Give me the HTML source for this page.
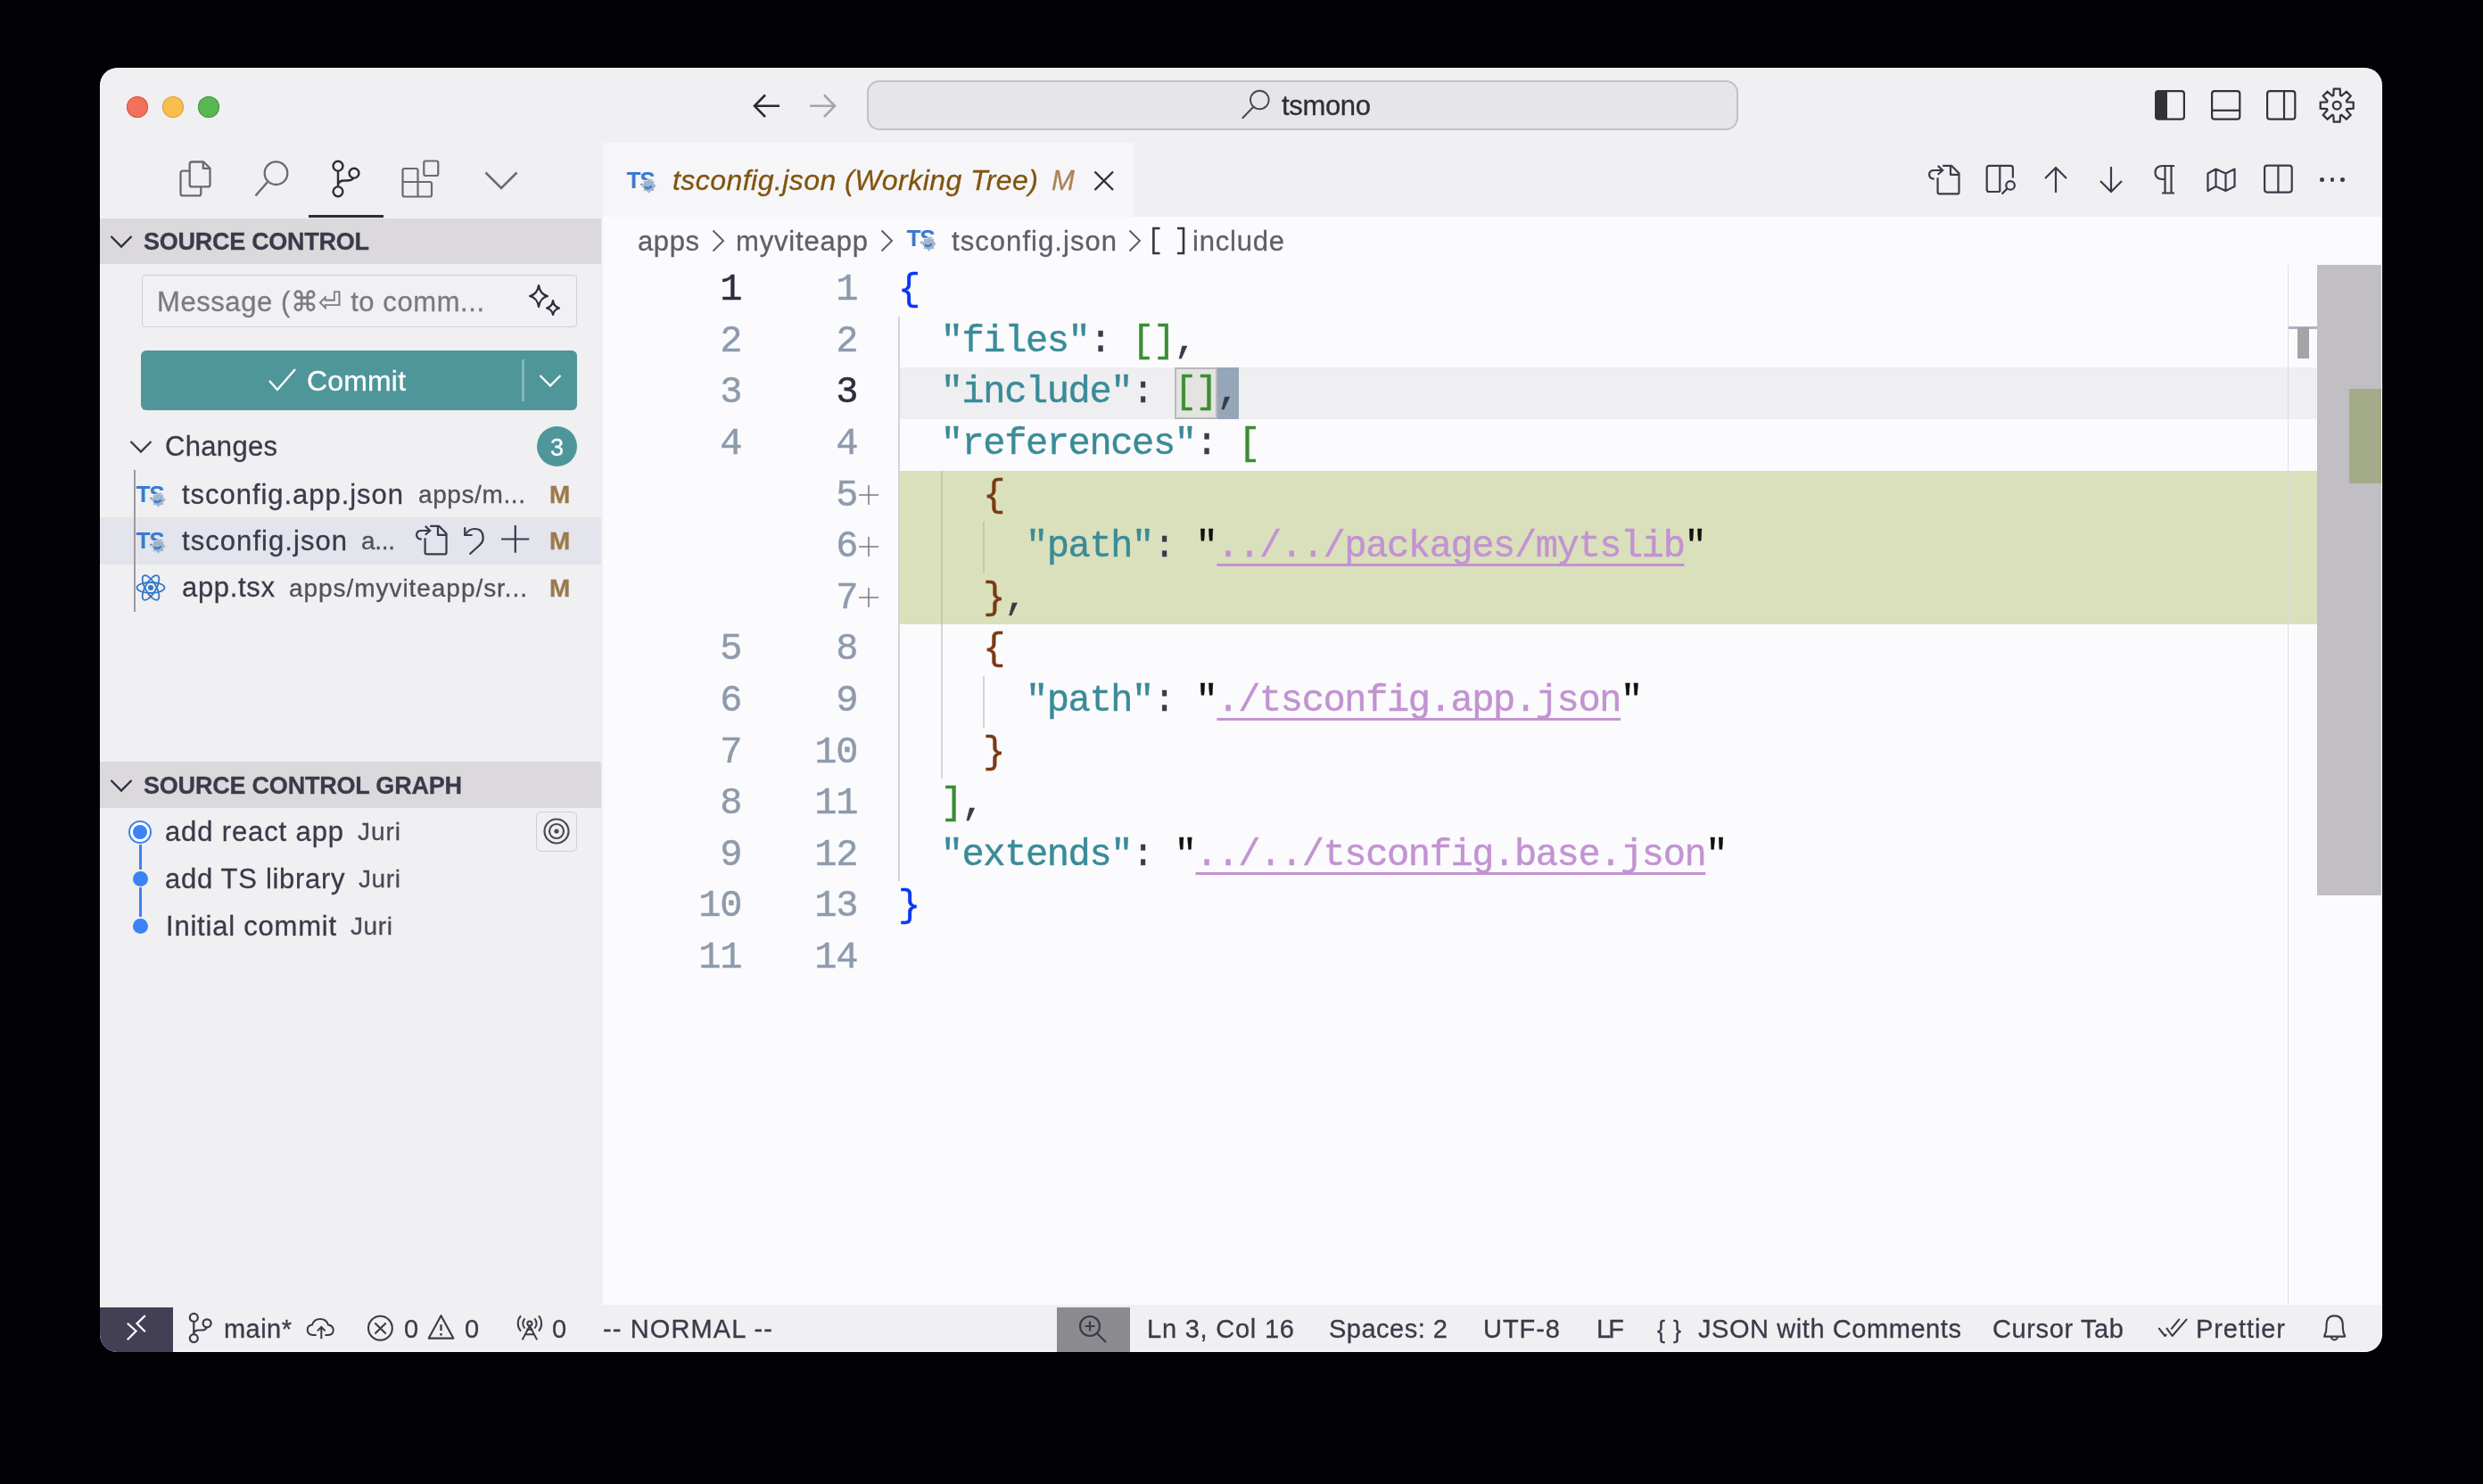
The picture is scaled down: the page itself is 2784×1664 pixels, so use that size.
<!DOCTYPE html>
<html><head><meta charset="utf-8">
<style>
*{box-sizing:border-box;margin:0;padding:0}
html,body{width:2784px;height:1664px;background:#020105;overflow:hidden;position:relative;font-family:"Liberation Sans",sans-serif;color:#3b3a4a}
.a{position:absolute}
.t{position:absolute;white-space:pre;line-height:1;will-change:transform;-webkit-text-stroke:0.3px currentColor}
svg{position:absolute;overflow:visible}
.cl{will-change:transform;-webkit-text-stroke:0.45px currentColor;position:absolute;left:1007px;height:57.6px;line-height:57.6px;font-family:"Liberation Mono",monospace;font-size:42px;letter-spacing:-1.38px;white-space:pre;color:#3b3a4a}
.ln{will-change:transform;-webkit-text-stroke:0.45px currentColor;position:absolute;height:57.6px;line-height:57.6px;font-family:"Liberation Mono",monospace;font-size:42px;letter-spacing:-1.38px;white-space:pre;color:#8d9bad;text-align:right}
.l1{left:630px;width:201px}
.l2{left:760px;width:201px}
.act{color:#2e2d3d}
.pl{position:absolute;left:958px;width:30px;height:57.6px;line-height:57.6px;font-family:"Liberation Sans",sans-serif;font-size:38px;color:#8a8a8a;text-align:center}
.k{color:#3a8b99}.p{color:#3b3a4a}.q{color:#111}.s{color:#c293d2;text-decoration:underline;text-decoration-thickness:2.5px;text-underline-offset:8px;text-decoration-skip-ink:none}
.b0{color:#0a36f5}.b1{color:#3a8e33}.b2{color:#7a3a15}
</style></head><body>
<div class="a" style="left:112.0px;top:76.0px;width:2559.0px;height:1440.0px;background:#f0eff1;border-radius:20px;box-shadow:inset 0 0 0 1px rgba(255,255,255,0.55);"></div>
<div class="a" style="left:142.0px;top:108.0px;width:24.0px;height:24.0px;background:#f2705d;border-radius:50%;box-shadow:inset 0 0 0 1px #d9553f;"></div>
<div class="a" style="left:182.0px;top:108.0px;width:24.0px;height:24.0px;background:#f8bd4c;border-radius:50%;box-shadow:inset 0 0 0 1px #dba236;"></div>
<div class="a" style="left:222.0px;top:108.0px;width:24.0px;height:24.0px;background:#5ab653;border-radius:50%;box-shadow:inset 0 0 0 1px #3e9a3a;"></div>
<div class="a" style="left:676.0px;top:243.0px;width:1995.0px;height:1220.0px;background:#fbfafc;"></div>
<div class="a" style="left:676.0px;top:160.0px;width:595.0px;height:83.0px;background:#f6f5f7;"></div>
<div class="a" style="left:112.0px;top:245.0px;width:562.0px;height:51.0px;background:#dbd9dc;"></div>
<div class="a" style="left:112.0px;top:854.0px;width:562.0px;height:52.0px;background:#dbd9dc;"></div>
<div class="a" style="left:112.0px;top:580.0px;width:562.0px;height:53.0px;background:#e3e4ec;"></div>
<div class="a" style="left:346.0px;top:241.0px;width:84.0px;height:3.0px;background:#2e2d3d;"></div>
<div class="a" style="left:112.0px;top:1466.0px;width:82.0px;height:50.0px;background:#433f55;border-bottom-left-radius:20px;"></div>
<div class="a" style="left:1185.0px;top:1466.0px;width:82.0px;height:50.0px;background:#8b8a8f;"></div>
<svg style="left:840.0px;top:100.0px;" width="40.0" height="40.0" viewBox="0 0 40 40"><path d="M34 18.8H6.5M18 6.5L6 18.8L18 31" fill="none" stroke="#2b2a30" stroke-width="2.6"/></svg>
<svg style="left:902.0px;top:100.0px;" width="40.0" height="40.0" viewBox="0 0 40 40"><path d="M6 18.8H33.5M22 6.5L34 18.8L22 31" fill="none" stroke="#a6a5a9" stroke-width="2.6"/></svg>
<div class="a" style="left:972.0px;top:90.0px;width:977.0px;height:56.0px;background:#e6e5e9;border:2.2px solid #c2c1c5;border-radius:14px;"></div>
<svg style="left:1390.0px;top:98.0px;" width="40.0" height="40.0" viewBox="0 0 40 40"><circle cx="22.3" cy="14" r="10.3" fill="none" stroke="#4a494f" stroke-width="1.9"/><path d="M15 22.3L2.8 34.8" stroke="#4a494f" stroke-width="2"/></svg>
<div class="t" style="left:1437.0px;top:103.4px;font-size:31.0px;color:#2f2e33;letter-spacing:-0.33px;">tsmono</div>
<svg style="left:2416.0px;top:101.0px;" width="34.0" height="34.0" viewBox="0 0 34 34"><rect x="1.1" y="1.1" width="31.8" height="31.6" rx="3" fill="none" stroke="#333238" stroke-width="2.2"/><path d="M1 4Q1 1 4 1H14V33H4Q1 33 1 30Z" fill="#333238"/></svg>
<svg style="left:2479.0px;top:101.0px;" width="34.0" height="34.0" viewBox="0 0 34 34"><rect x="1.1" y="1.1" width="31.2" height="31.6" rx="3" fill="none" stroke="#333238" stroke-width="2.2"/><path d="M1 22.8H33" stroke="#333238" stroke-width="2.2"/></svg>
<svg style="left:2541.0px;top:101.0px;" width="34.0" height="34.0" viewBox="0 0 34 34"><rect x="1.1" y="1.1" width="31.2" height="31.6" rx="3" fill="none" stroke="#333238" stroke-width="2.2"/><path d="M20 1V33" stroke="#333238" stroke-width="2.2"/></svg>
<svg style="left:2601.0px;top:98.5px;" width="38.4" height="38.4" viewBox="0 0 38.4 38.4"><polygon points="15.33,7.95 15.77,0.71 22.63,0.71 23.07,7.95 24.42,8.50 29.85,3.71 34.69,8.55 29.90,13.98 30.45,15.33 37.69,15.77 37.69,22.63 30.45,23.07 29.90,24.42 34.69,29.85 29.85,34.69 24.42,29.90 23.07,30.45 22.63,37.69 15.77,37.69 15.33,30.45 13.98,29.90 8.55,34.69 3.71,29.85 8.50,24.42 7.95,23.07 0.71,22.63 0.71,15.77 7.95,15.33 8.50,13.98 3.71,8.55 8.55,3.71 13.98,8.50" fill="none" stroke="#333238" stroke-width="2.2" stroke-linejoin="miter"/><circle cx="19.2" cy="19.2" r="4.4" fill="none" stroke="#333238" stroke-width="2.3"/></svg>
<svg style="left:200.0px;top:179.0px;" width="38.0" height="42.0" viewBox="0 0 38 42"><path d="M15.2 2.5H28.3L35.5 9.7V27.9Q35.5 30.4 33 30.4H15.2Q12.7 30.4 12.7 27.9V5Q12.7 2.5 15.2 2.5Z M27.8 2.5V9.9H35.5 M12.7 12.7H5Q2.5 12.7 2.5 15.2V37.9Q2.5 40.4 5 40.4H22.8Q25.3 40.4 25.3 37.9V30.4" fill="none" stroke="#6b6a71" stroke-width="2.3" stroke-linejoin="round"/></svg>
<svg style="left:284.0px;top:179.0px;" width="40.0" height="42.0" viewBox="0 0 40 42"><circle cx="25.5" cy="15.2" r="12.8" fill="none" stroke="#6b6a71" stroke-width="2.3"/><path d="M16 25L2.5 40.5" stroke="#6b6a71" stroke-width="2.5"/></svg>
<svg style="left:370.0px;top:179.0px;" width="36.0" height="42.0" viewBox="0 0 36 42"><circle cx="9" cy="7.2" r="5.4" fill="none" stroke="#2e2d33" stroke-width="2.4"/><circle cx="9" cy="35.8" r="5.4" fill="none" stroke="#2e2d33" stroke-width="2.4"/><circle cx="27" cy="15.2" r="5.4" fill="none" stroke="#2e2d33" stroke-width="2.4"/><path d="M9 12.6V30.4M9 28Q10 23.5 16 23.5H19Q25 23.5 26 20.5" fill="none" stroke="#2e2d33" stroke-width="2.4"/></svg>
<svg style="left:450.0px;top:179.0px;" width="44.0" height="44.0" viewBox="0 0 44 44"><path d="M3.5 10H16.5Q18.5 10 18.5 12V25H32Q34 25 34 27V39.5Q34 41.5 32 41.5H3.5Q1.5 41.5 1.5 39.5V12Q1.5 10 3.5 10Z M1.5 25H18.5V41.5" fill="none" stroke="#6b6a71" stroke-width="2.2" stroke-linejoin="round"/><rect x="25.3" y="1.5" width="16" height="16.5" rx="2" fill="none" stroke="#6b6a71" stroke-width="2.2"/></svg>
<svg style="left:542.0px;top:190.0px;" width="40.0" height="24.0" viewBox="0 0 40 24"><path d="M2.5 3.5L20 21L37.5 3.5" fill="none" stroke="#6b6a71" stroke-width="2.6"/></svg>
<svg style="left:702.0px;top:189.0px;" width="36.0" height="30.0" viewBox="0 0 36 30"><text x="0.5" y="22" font-family="Liberation Sans" font-weight="bold" font-size="26" fill="#3a7bd0" letter-spacing="-1.2">TS</text><polygon points="34.30,19.50 31.41,21.95 31.72,25.72 27.95,25.41 25.50,28.30 23.05,25.41 19.28,25.72 19.59,21.95 16.70,19.50 19.59,17.05 19.28,13.28 23.05,13.59 25.50,10.70 27.95,13.59 31.72,13.28 31.41,17.05" fill="#a3b6c9" stroke="#f5f4f8" stroke-width="1"/><path d="M21 20.5Q25 24 28.5 19.5" fill="none" stroke="#3a7bd0" stroke-width="2.6"/></svg>
<div class="t" style="left:754.0px;top:185.9px;font-size:32.0px;color:#80540f;letter-spacing:0.45px;font-style:italic;">tsconfig.json (Working Tree)</div>
<div class="t" style="left:1179.0px;top:186.8px;font-size:31.0px;color:#a78555;letter-spacing:0.00px;font-style:italic;">M</div>
<svg style="left:1224.0px;top:189.0px;" width="28.0" height="28.0" viewBox="0 0 28 28"><path d="M3.5 3.5L24 24M24 3.5L3.5 24" stroke="#2e2d3d" stroke-width="2.4"/></svg>
<svg style="left:2161.0px;top:184.0px;" width="38.0" height="36.0" viewBox="0 0 38 36"><path d="M11.6 15.3V31.5Q11.6 33.4 13.6 33.4H33.5Q35.5 33.4 35.5 31.4V10.2L27.3 1.9H17.2M26 1.9V11.8H35.5" fill="none" stroke="#3b3a4a" stroke-width="2.2" stroke-linejoin="round"/><path d="M7.7 16.7Q2.1 16.2 2.1 11.8Q2.1 7 7.5 7H17.2M11.8 1.9L17.2 7L11.8 11.8" fill="none" stroke="#3b3a4a" stroke-width="2.2"/></svg>
<svg style="left:2226.0px;top:184.0px;" width="36.0" height="36.0" viewBox="0 0 36 36"><path d="M16.3 31H4.2Q1.7 31 1.7 28.5V4.4Q1.7 1.9 4.2 1.9H28.4Q30.9 1.9 30.9 4.4V15.5M16.3 1.9V31" fill="none" stroke="#3b3a4a" stroke-width="2.2"/><circle cx="28.1" cy="23.9" r="4.8" fill="none" stroke="#3b3a4a" stroke-width="2.2"/><path d="M24.5 27.5L18.6 33.4" stroke="#3b3a4a" stroke-width="2.2"/></svg>
<svg style="left:2291.0px;top:186.0px;" width="28.0" height="32.0" viewBox="0 0 28 32"><path d="M14 30V2M2 14L14 2L26 14" fill="none" stroke="#3b3a4a" stroke-width="2.2"/></svg>
<svg style="left:2353.0px;top:186.0px;" width="28.0" height="32.0" viewBox="0 0 28 32"><path d="M14 1V29M2 17L14 29L26 17" fill="none" stroke="#3b3a4a" stroke-width="2.2"/></svg>
<svg style="left:2415.0px;top:184.0px;" width="24.0" height="34.0" viewBox="0 0 24 34"><path d="M23 2H10Q1.5 2 1.5 9.5Q1.5 17 10 17H12.5M12.5 2V32.5M19.5 2V32.5M9 32.5H23" fill="none" stroke="#3b3a4a" stroke-width="2.2"/></svg>
<svg style="left:2474.0px;top:188.0px;" width="34.0" height="28.0" viewBox="0 0 34 28"><path d="M1.5 6.5L10.5 1.5L21.5 6.5L31.5 1.5V21L21.5 26L10.5 21L1.5 26Z M10.5 1.5V21M21.5 6.5V26" fill="none" stroke="#3b3a4a" stroke-width="2.2" stroke-linejoin="round"/></svg>
<svg style="left:2538.0px;top:184.0px;" width="34.0" height="34.0" viewBox="0 0 34 34"><rect x="1.1" y="1.6" width="30.6" height="30" rx="3" fill="none" stroke="#3b3a4a" stroke-width="2.2"/><path d="M16.4 1.5V31.6" stroke="#3b3a4a" stroke-width="2.2"/></svg>
<div class="a" style="left:2601.2px;top:199.3px;width:4.6px;height:4.6px;background:#3b3a4a;border-radius:50%;"></div>
<div class="a" style="left:2612.7px;top:199.3px;width:4.6px;height:4.6px;background:#3b3a4a;border-radius:50%;"></div>
<div class="a" style="left:2624.2px;top:199.3px;width:4.6px;height:4.6px;background:#3b3a4a;border-radius:50%;"></div>
<div class="t" style="left:715.0px;top:254.8px;font-size:31.0px;color:#5f5e6a;letter-spacing:0.59px;">apps</div>
<svg style="left:796.0px;top:255.0px;" width="18.0" height="30.0" viewBox="0 0 18 30"><path d="M3.5 3.5L15 15L3.5 26.5" fill="none" stroke="#5f5e6a" stroke-width="2"/></svg>
<div class="t" style="left:825.0px;top:254.8px;font-size:31.0px;color:#5f5e6a;letter-spacing:0.84px;">myviteapp</div>
<svg style="left:985.0px;top:255.0px;" width="18.0" height="30.0" viewBox="0 0 18 30"><path d="M3.5 3.5L15 15L3.5 26.5" fill="none" stroke="#5f5e6a" stroke-width="2"/></svg>
<svg style="left:1016.0px;top:254.0px;" width="36.0" height="30.0" viewBox="0 0 36 30"><text x="0.5" y="22" font-family="Liberation Sans" font-weight="bold" font-size="26" fill="#3a7bd0" letter-spacing="-1.2">TS</text><polygon points="34.30,19.50 31.41,21.95 31.72,25.72 27.95,25.41 25.50,28.30 23.05,25.41 19.28,25.72 19.59,21.95 16.70,19.50 19.59,17.05 19.28,13.28 23.05,13.59 25.50,10.70 27.95,13.59 31.72,13.28 31.41,17.05" fill="#a3b6c9" stroke="#fbfafd" stroke-width="1"/><path d="M21 20.5Q25 24 28.5 19.5" fill="none" stroke="#3a7bd0" stroke-width="2.6"/></svg>
<div class="t" style="left:1067.0px;top:254.8px;font-size:31.0px;color:#5f5e6a;letter-spacing:1.06px;">tsconfig.json</div>
<svg style="left:1263.0px;top:255.0px;" width="18.0" height="30.0" viewBox="0 0 18 30"><path d="M3.5 3.5L15 15L3.5 26.5" fill="none" stroke="#5f5e6a" stroke-width="2"/></svg>
<svg style="left:1291.0px;top:253.5px;" width="40.0" height="32.0" viewBox="0 0 40 32"><path d="M9.5 2H2.4V30H9.5M29 2H36V30H29" fill="none" stroke="#35343f" stroke-width="2.6"/></svg>
<div class="t" style="left:1337.0px;top:254.8px;font-size:31.0px;color:#5f5e6a;letter-spacing:0.79px;">include</div>
<svg style="left:122.0px;top:262.0px;" width="28.0" height="18.0" viewBox="0 0 28 18"><path d="M2.5 3L14 14.5L25.5 3" fill="none" stroke="#2e2d3d" stroke-width="2.3"/></svg>
<div class="t" style="left:161.0px;top:257.8px;font-size:27.0px;color:#3b3a4a;letter-spacing:-0.27px;font-weight:bold;">SOURCE CONTROL</div>
<div class="a" style="left:158.5px;top:307.5px;width:488.0px;height:59.0px;background:#f1f0f4;border:1.6px solid #d1d0d5;border-radius:4px;"></div>
<div class="t" style="left:176.0px;top:322.5px;font-size:31.0px;color:#7b7a80;letter-spacing:0.57px;">Message (⌘⏎ to comm...</div>
<svg style="left:592.0px;top:318.0px;" width="40.0" height="38.0" viewBox="0 0 40 38"><path d="M12 2Q13.5 12 22 14Q13.5 16 12 26Q10.5 16 2 14Q10.5 12 12 2Z" fill="none" stroke="#2e2d3d" stroke-width="2.2" stroke-linejoin="round"/><path d="M28 19Q29 26 35 27.5Q29 29 28 35Q27 29 21 27.5Q27 26 28 19Z" fill="none" stroke="#2e2d3d" stroke-width="2.2" stroke-linejoin="round"/></svg>
<div class="a" style="left:158.0px;top:393.0px;width:489.0px;height:67.0px;background:#4e9699;border-radius:6px;"></div>
<svg style="left:300.0px;top:412.0px;" width="34.0" height="28.0" viewBox="0 0 34 28"><path d="M2 15L11 25L31 2" fill="none" stroke="#fff" stroke-width="2.4"/></svg>
<div class="t" style="left:344.0px;top:410.9px;font-size:32.0px;color:#ffffff;letter-spacing:0.16px;">Commit</div>
<div class="a" style="left:585.0px;top:403.0px;width:2.5px;height:47.0px;background:#86b6b8;"></div>
<svg style="left:603.0px;top:418.0px;" width="28.0" height="18.0" viewBox="0 0 28 18"><path d="M2.5 3L14 14.5L25.5 3" fill="none" stroke="#fff" stroke-width="2.3"/></svg>
<svg style="left:144.0px;top:492.0px;" width="28.0" height="18.0" viewBox="0 0 28 18"><path d="M2.5 3L14 14.5L25.5 3" fill="none" stroke="#3b3a4a" stroke-width="2.3"/></svg>
<div class="t" style="left:185.0px;top:485.3px;font-size:31.0px;color:#3b3a4a;letter-spacing:0.32px;">Changes</div>
<div class="a" style="left:602.0px;top:478.0px;width:45.0px;height:45.0px;background:#4e9699;border-radius:50%;"></div>
<div class="t" style="left:616.5px;top:489.1px;font-size:27.0px;color:#ffffff;letter-spacing:0.00px;">3</div>
<div class="a" style="left:150.0px;top:527.0px;width:2.0px;height:159.0px;background:#9c9ba0;"></div>
<svg style="left:152.0px;top:541.0px;" width="36.0" height="30.0" viewBox="0 0 36 30"><text x="0.5" y="22" font-family="Liberation Sans" font-weight="bold" font-size="26" fill="#3a7bd0" letter-spacing="-1.2">TS</text><polygon points="34.30,19.50 31.41,21.95 31.72,25.72 27.95,25.41 25.50,28.30 23.05,25.41 19.28,25.72 19.59,21.95 16.70,19.50 19.59,17.05 19.28,13.28 23.05,13.59 25.50,10.70 27.95,13.59 31.72,13.28 31.41,17.05" fill="#a3b6c9" stroke="#efeef2" stroke-width="1"/><path d="M21 20.5Q25 24 28.5 19.5" fill="none" stroke="#3a7bd0" stroke-width="2.6"/></svg>
<div class="t" style="left:204.0px;top:538.7px;font-size:31.0px;color:#3b3a4a;letter-spacing:0.96px;">tsconfig.app.json</div>
<div class="t" style="left:468.5px;top:541.2px;font-size:28.0px;color:#52515d;letter-spacing:0.60px;">apps/m...</div>
<div class="t" style="left:616.0px;top:541.2px;font-size:28.0px;color:#9a7a4c;letter-spacing:0.00px;font-weight:bold;">M</div>
<svg style="left:152.0px;top:593.0px;" width="36.0" height="30.0" viewBox="0 0 36 30"><text x="0.5" y="22" font-family="Liberation Sans" font-weight="bold" font-size="26" fill="#3a7bd0" letter-spacing="-1.2">TS</text><polygon points="34.30,19.50 31.41,21.95 31.72,25.72 27.95,25.41 25.50,28.30 23.05,25.41 19.28,25.72 19.59,21.95 16.70,19.50 19.59,17.05 19.28,13.28 23.05,13.59 25.50,10.70 27.95,13.59 31.72,13.28 31.41,17.05" fill="#a3b6c9" stroke="#e3e4ec" stroke-width="1"/><path d="M21 20.5Q25 24 28.5 19.5" fill="none" stroke="#3a7bd0" stroke-width="2.6"/></svg>
<div class="t" style="left:204.0px;top:590.6px;font-size:31.0px;color:#3b3a4a;letter-spacing:1.06px;">tsconfig.json</div>
<div class="t" style="left:405.0px;top:593.1px;font-size:28.0px;color:#52515d;letter-spacing:-0.31px;">a...</div>
<svg style="left:465.3px;top:588.0px;" width="38.0" height="36.0" viewBox="0 0 38 36"><path d="M11.6 15.3V31.5Q11.6 33.4 13.6 33.4H33.5Q35.5 33.4 35.5 31.4V10.2L27.3 1.9H17.2M26 1.9V11.8H35.5" fill="none" stroke="#3b3a4a" stroke-width="2.2" stroke-linejoin="round"/><path d="M7.7 16.7Q2.1 16.2 2.1 11.8Q2.1 7 7.5 7H17.2M11.8 1.9L17.2 7L11.8 11.8" fill="none" stroke="#3b3a4a" stroke-width="2.2"/></svg>
<svg style="left:518.0px;top:588.0px;" width="28.0" height="36.0" viewBox="0 0 28 36"><path d="M3.2 3.3V12H11.6" fill="none" stroke="#3b3a4a" stroke-width="2.2"/><path d="M4.5 10.5Q8 5 14.2 5Q23.7 5 23.7 15.4Q23.7 19.5 20 23L8.5 33.5" fill="none" stroke="#3b3a4a" stroke-width="2.2"/></svg>
<svg style="left:560.0px;top:588.0px;" width="36.0" height="36.0" viewBox="0 0 36 36"><path d="M17.8 1V31.8M2 16.5H33.3" stroke="#3b3a4a" stroke-width="2.2"/></svg>
<div class="t" style="left:616.0px;top:593.1px;font-size:28.0px;color:#9a7a4c;letter-spacing:0.00px;font-weight:bold;">M</div>
<svg style="left:152.0px;top:643.0px;" width="34.0" height="32.0" viewBox="0 0 34 32"><g fill="none" stroke="#3178c6" stroke-width="1.8"><ellipse cx="17" cy="16" rx="15.5" ry="6"/><ellipse cx="17" cy="16" rx="15.5" ry="6" transform="rotate(60 17 16)"/><ellipse cx="17" cy="16" rx="15.5" ry="6" transform="rotate(120 17 16)"/></g><circle cx="17" cy="16" r="3" fill="#3178c6"/></svg>
<div class="t" style="left:204.0px;top:643.3px;font-size:31.0px;color:#3b3a4a;letter-spacing:0.67px;">app.tsx</div>
<div class="t" style="left:323.5px;top:645.8px;font-size:28.0px;color:#52515d;letter-spacing:0.95px;">apps/myviteapp/sr...</div>
<div class="t" style="left:616.0px;top:645.8px;font-size:28.0px;color:#9a7a4c;letter-spacing:0.00px;font-weight:bold;">M</div>
<svg style="left:122.0px;top:872.0px;" width="28.0" height="18.0" viewBox="0 0 28 18"><path d="M2.5 3L14 14.5L25.5 3" fill="none" stroke="#2e2d3d" stroke-width="2.3"/></svg>
<div class="t" style="left:160.5px;top:867.8px;font-size:27.0px;color:#3b3a4a;letter-spacing:-0.21px;font-weight:bold;">SOURCE CONTROL GRAPH</div>
<div class="a" style="left:144.3px;top:919.5px;width:26.0px;height:26.0px;background:#fff;border-radius:50%;border:2.6px solid #3b82f6;"></div>
<div class="a" style="left:149.3px;top:924.5px;width:16.0px;height:16.0px;background:#3b82f6;border-radius:50%;"></div>
<div class="a" style="left:155.8px;top:947.0px;width:3.0px;height:28.0px;background:#3b82f6;"></div>
<div class="a" style="left:155.8px;top:995.0px;width:3.0px;height:33.0px;background:#3b82f6;"></div>
<div class="a" style="left:148.8px;top:976.5px;width:17.0px;height:17.0px;background:#3b82f6;border-radius:50%;"></div>
<div class="a" style="left:148.8px;top:1030.0px;width:17.0px;height:17.0px;background:#3b82f6;border-radius:50%;"></div>
<div class="t" style="left:185.0px;top:916.5px;font-size:31.0px;color:#3b3a4a;letter-spacing:0.87px;">add react app</div>
<div class="t" style="left:400.5px;top:919.0px;font-size:28.0px;color:#4a4958;letter-spacing:0.96px;">Juri</div>
<div class="t" style="left:185.0px;top:969.7px;font-size:31.0px;color:#3b3a4a;letter-spacing:0.70px;">add TS library</div>
<div class="t" style="left:402.0px;top:972.2px;font-size:28.0px;color:#4a4958;letter-spacing:0.62px;">Juri</div>
<div class="t" style="left:186.0px;top:1022.8px;font-size:31.0px;color:#3b3a4a;letter-spacing:0.78px;">Initial commit</div>
<div class="t" style="left:393.0px;top:1025.3px;font-size:28.0px;color:#4a4958;letter-spacing:0.62px;">Juri</div>
<div class="a" style="left:601.0px;top:910.0px;width:46.0px;height:45.0px;background:transparent;border:1.6px solid #cfced3;border-radius:5px;"></div>
<svg style="left:608.0px;top:916.0px;" width="32.0" height="32.0" viewBox="0 0 32 32"><circle cx="16" cy="16" r="13.5" fill="none" stroke="#4a4958" stroke-width="2.2"/><circle cx="16" cy="16" r="8" fill="none" stroke="#4a4958" stroke-width="2.2"/><circle cx="16" cy="16" r="2.6" fill="#4a4958"/></svg>
<svg style="left:140.0px;top:1473.0px;" width="26.0" height="32.0" viewBox="0 0 26 32"><path d="M2.8 10.8L12.5 19.5L2.8 29.2M22.8 2.1L13.5 11.1L22.8 20.2" fill="none" stroke="#fff" stroke-width="2.2"/></svg>
<svg style="left:208.0px;top:1471.0px;" width="32.0" height="36.0" viewBox="0 0 32 36"><circle cx="9.3" cy="6.4" r="4.5" fill="none" stroke="#3b3a4a" stroke-width="2.2"/><circle cx="9.3" cy="29.6" r="4.5" fill="none" stroke="#3b3a4a" stroke-width="2.2"/><circle cx="24.1" cy="12.8" r="4.5" fill="none" stroke="#3b3a4a" stroke-width="2.2"/><path d="M9.3 10.9V25.1M9.3 24Q10 20.5 15 20.5H18Q22.5 20.5 23.8 17.3" fill="none" stroke="#3b3a4a" stroke-width="2.2"/></svg>
<div class="t" style="left:250.5px;top:1475.9px;font-size:29.0px;color:#3b3a4a;letter-spacing:0.46px;">main*</div>
<svg style="left:343.0px;top:1478.0px;" width="34.0" height="26.0" viewBox="0 0 34 26"><path d="M11.7 18.9H8Q1.8 18.9 1.8 13Q1.8 8 7 7.5Q9 1 16 1Q23 1 25 7.5Q30.7 8.5 30.7 13.5Q30.7 18.9 25 18.9H21.5" fill="none" stroke="#3b3a4a" stroke-width="2"/><path d="M17.3 23.2V10.5M12.9 14.4L17.3 10L21.7 14.4" fill="none" stroke="#3b3a4a" stroke-width="2"/></svg>
<svg style="left:410.0px;top:1474.0px;" width="32.0" height="32.0" viewBox="0 0 32 32"><circle cx="16.4" cy="15.2" r="13.4" fill="none" stroke="#3b3a4a" stroke-width="2.1"/><path d="M10.4 9.4L22.7 21.6M22.7 9.4L10.4 21.6" stroke="#3b3a4a" stroke-width="2.1"/></svg>
<div class="t" style="left:453.0px;top:1475.9px;font-size:29.0px;color:#3b3a4a;letter-spacing:0.00px;">0</div>
<svg style="left:479.0px;top:1473.0px;" width="32.0" height="32.0" viewBox="0 0 32 32"><path d="M15.5 2.2L29.3 27.6H1.7Z" fill="none" stroke="#3b3a4a" stroke-width="2.1" stroke-linejoin="round"/><path d="M15.5 12.2V19" stroke="#3b3a4a" stroke-width="2.3"/><circle cx="15.5" cy="23.3" r="1.4" fill="#3b3a4a"/></svg>
<div class="t" style="left:521.0px;top:1475.9px;font-size:29.0px;color:#3b3a4a;letter-spacing:0.00px;">0</div>
<svg style="left:578.0px;top:1473.0px;" width="32.0" height="32.0" viewBox="0 0 32 32"><path d="M6 2.4Q2.7 6 2.7 11Q2.7 16 6 19.6M26 2.4Q29.1 6 29.1 11Q29.1 16 26 19.6M10.5 5.4Q8.2 8 8.2 11Q8.2 14 10.5 16.5M21.3 5.4Q23.6 8 23.6 11Q23.6 14 21.3 16.5M15.9 13.8L7.6 29.4M15.9 13.8L24.2 29.4M12.3 17.7H19.5M10 23.3H21.8" fill="none" stroke="#3b3a4a" stroke-width="2"/><circle cx="15.9" cy="11" r="2.6" fill="none" stroke="#3b3a4a" stroke-width="2"/></svg>
<div class="t" style="left:619.0px;top:1475.9px;font-size:29.0px;color:#3b3a4a;letter-spacing:0.00px;">0</div>
<div class="t" style="left:675.5px;top:1475.9px;font-size:29.0px;color:#3b3a4a;letter-spacing:1.11px;">-- NORMAL --</div>
<svg style="left:1208.0px;top:1474.0px;" width="36.0" height="34.0" viewBox="0 0 36 34"><circle cx="14" cy="13" r="11" fill="none" stroke="#3b3a4a" stroke-width="2.2"/><path d="M22 21L32 31M14 7.5V18.5M8.5 13H19.5" stroke="#3b3a4a" stroke-width="2.2"/></svg>
<div class="t" style="left:1286.0px;top:1475.9px;font-size:29.0px;color:#3b3a4a;letter-spacing:0.78px;">Ln 3, Col 16</div>
<div class="t" style="left:1490.0px;top:1475.9px;font-size:29.0px;color:#3b3a4a;letter-spacing:0.50px;">Spaces: 2</div>
<div class="t" style="left:1663.0px;top:1475.9px;font-size:29.0px;color:#3b3a4a;letter-spacing:0.96px;">UTF-8</div>
<div class="t" style="left:1790.0px;top:1475.9px;font-size:29.0px;color:#3b3a4a;letter-spacing:-2.84px;">LF</div>
<div class="t" style="left:1858.0px;top:1477.6px;font-size:27.0px;color:#3b3a4a;letter-spacing:0.73px;">{ }</div>
<div class="t" style="left:1904.0px;top:1475.9px;font-size:29.0px;color:#3b3a4a;letter-spacing:0.57px;">JSON with Comments</div>
<div class="t" style="left:2234.0px;top:1475.9px;font-size:29.0px;color:#3b3a4a;letter-spacing:0.63px;">Cursor Tab</div>
<svg style="left:2419.0px;top:1478.0px;" width="34.0" height="26.0" viewBox="0 0 34 26"><path d="M1.8 11.7L8.5 20L9.6 18.7M10.5 11.7L16.6 20L32.5 1.6M15.8 11.8L24.2 1.6" fill="none" stroke="#3b3a4a" stroke-width="2.1" stroke-linecap="round" stroke-linejoin="round"/></svg>
<div class="t" style="left:2462.0px;top:1475.9px;font-size:29.0px;color:#3b3a4a;letter-spacing:0.93px;">Prettier</div>
<svg style="left:2603.0px;top:1474.0px;" width="30.0" height="32.0" viewBox="0 0 30 32"><path d="M3 24.6Q5.5 20 5.5 14V12Q5.5 1.4 14.4 1.4Q23.8 1.4 23.8 12V14Q23.8 20 26.2 24.6Z" fill="none" stroke="#3b3a4a" stroke-width="2.1" stroke-linejoin="round"/><path d="M10.8 24.8A3.6 3.6 0 0 0 18 24.8" fill="none" stroke="#3b3a4a" stroke-width="2.1"/></svg>
<div class="a" style="left:1008.0px;top:412.0px;width:1590.0px;height:57.6px;background:#efeef0;"></div>
<div class="a" style="left:1007.0px;top:527.6px;width:1591.0px;height:172.8px;background:#dae0bb;"></div>
<div class="a" style="left:1317.0px;top:412.0px;width:47.6px;height:57.6px;background:#e3e3df;border:2px solid #b9b9bb;"></div>
<div class="a" style="left:1364.5px;top:412.0px;width:24.0px;height:57.6px;background:#95a6b9;"></div>
<div class="a" style="left:1007.0px;top:354.8px;width:2.0px;height:633.6px;background:#d4d3d8;"></div>
<div class="a" style="left:1055.0px;top:527.6px;width:2.0px;height:172.8px;background:#c4c8b0;"></div>
<div class="a" style="left:1055.0px;top:700.4px;width:2.0px;height:172.8px;background:#d6d5da;"></div>
<div class="a" style="left:1102.0px;top:585.2px;width:2.0px;height:57.6px;background:#c4c8b0;"></div>
<div class="a" style="left:1102.0px;top:758.0px;width:2.0px;height:57.6px;background:#d4d3d8;"></div>
<div class="a" style="left:2565.0px;top:297.0px;width:1.0px;height:1166.0px;background:#dddce0;"></div>
<div class="a" style="left:2598.0px;top:297.0px;width:72.0px;height:707.0px;background:#c1bfc3;"></div>
<div class="a" style="left:2634.0px;top:436.0px;width:36.0px;height:106.0px;background:#a4ab88;"></div>
<div class="a" style="left:2566.0px;top:366.0px;width:32.0px;height:3.0px;background:#a9b5c3;"></div>
<div class="a" style="left:2576.0px;top:367.0px;width:13.0px;height:35.0px;background:#a5a3a5;"></div>
<div class="cl" style="top:297.2px"><span class="b0">{</span></div>
<div class="ln l1 act" style="top:297.2px">1</div>
<div class="ln l2" style="top:297.2px">1</div>
<div class="cl" style="top:354.8px">  <span class="k">"files"</span><span class="p">: </span><span class="b1">[]</span><span class="p">,</span></div>
<div class="ln l1" style="top:354.8px">2</div>
<div class="ln l2" style="top:354.8px">2</div>
<div class="cl" style="top:412.4px">  <span class="k">"include"</span><span class="p">: </span><span class="b1">[]</span><span class="p">,</span></div>
<div class="ln l1" style="top:412.4px">3</div>
<div class="ln l2 act" style="top:412.4px">3</div>
<div class="cl" style="top:470.0px">  <span class="k">"references"</span><span class="p">: </span><span class="b1">[</span></div>
<div class="ln l1" style="top:470.0px">4</div>
<div class="ln l2" style="top:470.0px">4</div>
<div class="cl" style="top:527.6px">    <span class="b2">{</span></div>
<div class="ln l2" style="top:527.6px">5</div>
<svg style="left:963px;top:544.0px" width="22" height="22" viewBox="0 0 22 22"><path d="M11 0V22M0 11H22" stroke="#7c7a80" stroke-width="1.5"/></svg>
<div class="cl" style="top:585.2px">      <span class="k">"path"</span><span class="p">: </span><span class="q">"</span><span class="s">../../packages/mytslib</span><span class="q">"</span></div>
<div class="ln l2" style="top:585.2px">6</div>
<svg style="left:963px;top:601.6px" width="22" height="22" viewBox="0 0 22 22"><path d="M11 0V22M0 11H22" stroke="#7c7a80" stroke-width="1.5"/></svg>
<div class="cl" style="top:642.8px">    <span class="b2">}</span><span class="p">,</span></div>
<div class="ln l2" style="top:642.8px">7</div>
<svg style="left:963px;top:659.2px" width="22" height="22" viewBox="0 0 22 22"><path d="M11 0V22M0 11H22" stroke="#7c7a80" stroke-width="1.5"/></svg>
<div class="cl" style="top:700.4px">    <span class="b2">{</span></div>
<div class="ln l1" style="top:700.4px">5</div>
<div class="ln l2" style="top:700.4px">8</div>
<div class="cl" style="top:758.0px">      <span class="k">"path"</span><span class="p">: </span><span class="q">"</span><span class="s">./tsconfig.app.json</span><span class="q">"</span></div>
<div class="ln l1" style="top:758.0px">6</div>
<div class="ln l2" style="top:758.0px">9</div>
<div class="cl" style="top:815.6px">    <span class="b2">}</span></div>
<div class="ln l1" style="top:815.6px">7</div>
<div class="ln l2" style="top:815.6px">10</div>
<div class="cl" style="top:873.2px">  <span class="b1">]</span><span class="p">,</span></div>
<div class="ln l1" style="top:873.2px">8</div>
<div class="ln l2" style="top:873.2px">11</div>
<div class="cl" style="top:930.8px">  <span class="k">"extends"</span><span class="p">: </span><span class="q">"</span><span class="s">../../tsconfig.base.json</span><span class="q">"</span></div>
<div class="ln l1" style="top:930.8px">9</div>
<div class="ln l2" style="top:930.8px">12</div>
<div class="cl" style="top:988.4px"><span class="b0">}</span></div>
<div class="ln l1" style="top:988.4px">10</div>
<div class="ln l2" style="top:988.4px">13</div>
<div class="cl" style="top:1046.0px"></div>
<div class="ln l1" style="top:1046.0px">11</div>
<div class="ln l2" style="top:1046.0px">14</div>
</body></html>
